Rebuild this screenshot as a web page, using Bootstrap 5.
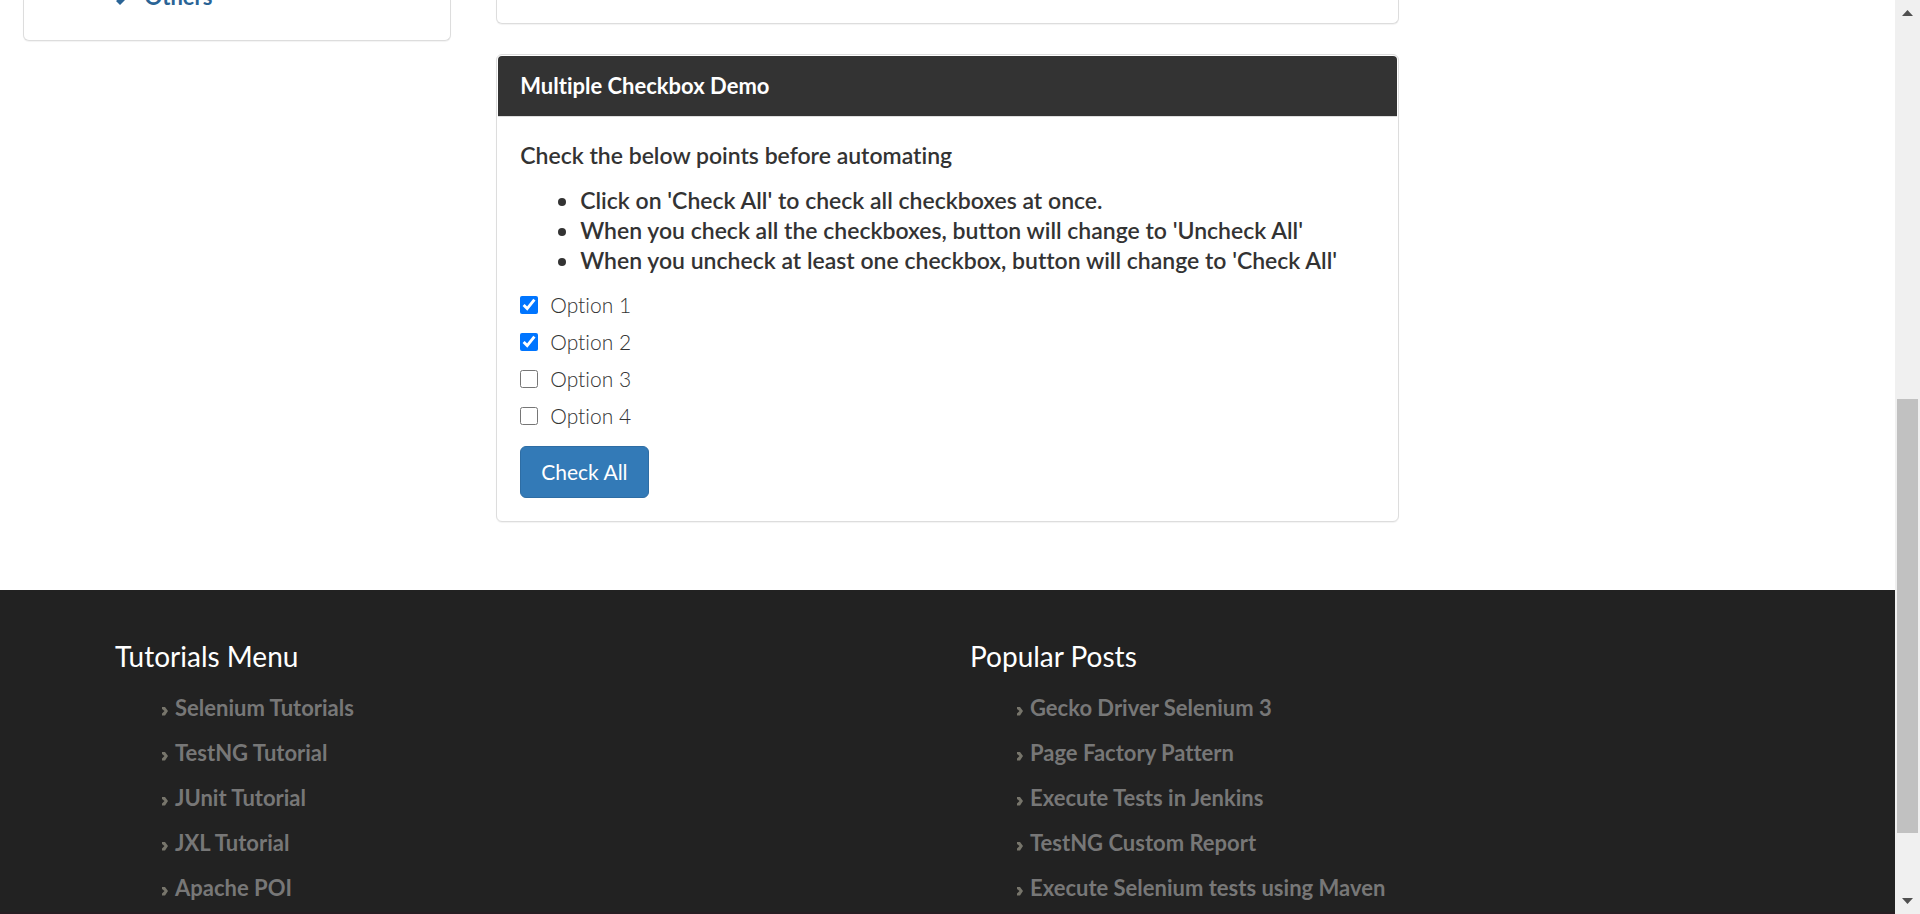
<!DOCTYPE html>
<html lang="en"><head><meta charset="utf-8"><title>Multiple Checkbox Demo</title>
<meta name="viewport" content="width=device-width, initial-scale=1">
<link href="https://cdn.jsdelivr.net/npm/bootstrap@5.3.0/dist/css/bootstrap.min.css" rel="stylesheet">
<style>
html,body{height:100%}
body{font-family:Lato,"Open Sans",sans-serif;font-size:22px;line-height:30px;color:#333;overflow:hidden;font-variant-ligatures:none}
.viewport{min-width:0;overflow:hidden}
.row{--bs-gutter-x:45px}
.card{border-color:#ddd;border-radius:6px;box-shadow:0 1px 1px rgba(0,0,0,.05)}
.card-cut{border-top:0;border-top-left-radius:0;border-top-right-radius:0}
.side-list{margin-top:-18px;padding:0 0 28px 92px}
.side-list a{display:flex;gap:15px;color:#2a6496;font-weight:700;text-decoration:none}
.prev-body{padding-top:23px}
.demo{padding:1px;margin:30px 0 68px}
.demo .card-header{background:#333;color:#fff;padding:15px 22px;border-bottom:1px solid #ddd;border-radius:4px 4px 0 0;font-weight:700}
.demo .card-body{padding:23px 22px 22px}
.points{font-size:23px;font-weight:600}
.points ul{padding-left:60px;margin:15px 0}
.options{display:grid;gap:7px;margin-bottom:15px;font-size:21px;font-weight:300}
.options label{display:flex;align-items:center;gap:12px;width:max-content}
.options input{width:18px;height:18px;margin:0;accent-color:#0075ff}
.btn-check-all,.btn-check-all:hover{background:#337ab7;border-color:#2e6da4;color:#fff;font-size:21px;line-height:30px;padding:10px 20px;border-radius:6px}
.site-footer{background:#222;padding-top:45px}
.site-footer .row{max-width:1710px;margin:0 auto;flex:1}
.site-footer h2{font-size:28px;line-height:42px;font-weight:400;color:#fff;margin:0 0 8px}
.site-footer li{height:45px;padding-top:8px}
.site-footer ul{list-style:none;padding-left:47px;margin:0}
.site-footer a{display:flex;align-items:center;gap:7px;color:#777;font-weight:700;text-decoration:none}
.site-footer svg{margin-top:6px}
.copy-strip{height:2px;background:#261d22}
.scroll-strip{width:25px;background:#f0f0f0;flex:none;padding:10px 2px}
.scroll-strip svg{flex:none;align-self:center}
.gap-above{flex:383}
.thumb{background:#c1c1c1;flex:434;width:21px}
.gap-below{flex:65}
</style></head><body>
<svg class="d-none"><symbol id="chev" viewBox="0 0 6 10"><path d="M0 1H3L6 5L3 9.500H0V7.500L2.500 5L0 3z" fill="#77756b"/></symbol></svg>
<div class="d-flex h-100">
<div class="viewport flex-grow-1 d-flex flex-column">
<main class="row m-0">
<div class="col-3"><aside class="card card-cut"><div class="side-list"><a href="#"><svg width="14" height="30" viewBox="0 0 14 30"><path d="M3 5L13 14L4 23L0 19L6 14z" fill="#2a6496"/></svg>Others</a></div></aside></div>
<div class="col-6">
<div class="card card-cut"><div class="prev-body"></div></div>
<section class="card demo">
<div class="card-header">Multiple Checkbox Demo</div>
<div class="card-body">
<div class="points">Check the below points before automating
<ul><li>Click on 'Check All' to check all checkboxes at once.</li><li>When you check all the checkboxes, button will change to 'Uncheck All'</li><li>When you uncheck at least one checkbox, button will change to 'Check All'</li></ul></div>
<div class="options">
<label><input type="checkbox" checked>Option 1</label>
<label><input type="checkbox" checked>Option 2</label>
<label><input type="checkbox">Option 3</label>
<label><input type="checkbox">Option 4</label>
</div>
<button type="button" class="btn btn-check-all">Check All</button>
</div></section></div></main>
<footer class="site-footer flex-grow-1 d-flex flex-column"><div class="row w-100">
<div class="col-6"><h2>Tutorials Menu</h2><ul>
<li><a href="#"><svg width="6" height="10"><use href="#chev"/></svg>Selenium Tutorials</a></li>
<li><a href="#"><svg width="6" height="10"><use href="#chev"/></svg>TestNG Tutorial</a></li>
<li><a href="#"><svg width="6" height="10"><use href="#chev"/></svg>JUnit Tutorial</a></li>
<li><a href="#"><svg width="6" height="10"><use href="#chev"/></svg>JXL Tutorial</a></li>
<li><a href="#"><svg width="6" height="10"><use href="#chev"/></svg>Apache POI</a></li></ul></div>
<div class="col-6"><h2>Popular Posts</h2><ul>
<li><a href="#"><svg width="6" height="10"><use href="#chev"/></svg>Gecko Driver Selenium 3</a></li>
<li><a href="#"><svg width="6" height="10"><use href="#chev"/></svg>Page Factory Pattern</a></li>
<li><a href="#"><svg width="6" height="10"><use href="#chev"/></svg>Execute Tests in Jenkins</a></li>
<li><a href="#"><svg width="6" height="10"><use href="#chev"/></svg>TestNG Custom Report</a></li>
<li><a href="#"><svg width="6" height="10"><use href="#chev"/></svg>Execute Selenium tests using Maven</a></li></ul></div>
</div><div class="copy-strip"></div></footer></div>
<div class="scroll-strip d-flex flex-column" aria-hidden="true">
<svg width="11" height="6"><path d="M5.500 0L11 6H0z" fill="#505050"/></svg>
<div class="gap-above"></div><div class="thumb"></div><div class="gap-below"></div>
<svg width="11" height="6"><path d="M0 0H11L5.500 6z" fill="#505050"/></svg>
</div>
</div>
<script src="https://cdn.jsdelivr.net/npm/bootstrap@5.3.0/dist/js/bootstrap.bundle.min.js"></script>
</body></html>
